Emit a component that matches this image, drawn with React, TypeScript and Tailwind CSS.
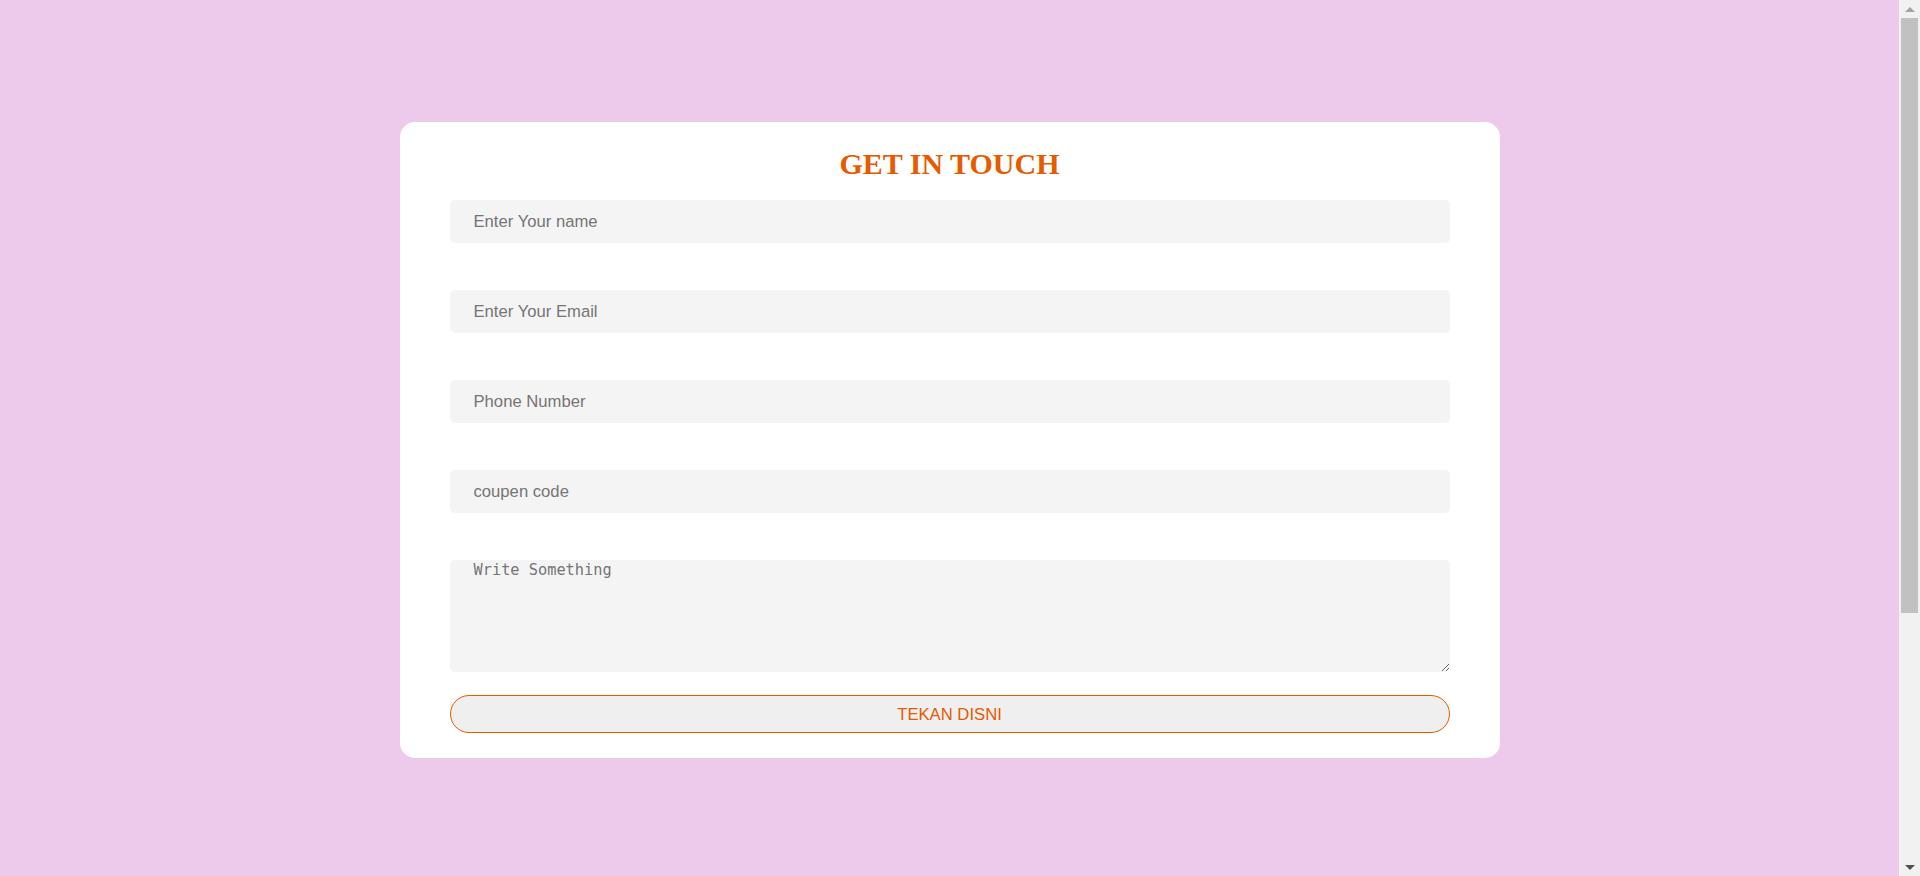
import React from 'react';

const fields = ['Enter Your name', 'Enter Your Email', 'Phone Number', 'coupen code'];

const Scrollbar: React.FC = () => (
  <div className="flex h-full w-[21px] shrink-0 flex-col bg-[#f1f1f1]">
    <div className="flex h-[18px] items-center justify-center">
      <div className="h-0 w-0 border-x-[5px] border-b-[5px] border-x-transparent border-b-[#a3a3a3]" />
    </div>
    <div className="mx-[2px] h-[595px] bg-[#c1c1c1]" />
    <div className="flex-1" />
    <div className="flex h-[18px] items-center justify-center">
      <div className="h-0 w-0 border-x-[5px] border-t-[5px] border-x-transparent border-t-[#505050]" />
    </div>
  </div>
);

const App: React.FC = () => {
  return (
    <div className="flex h-[876px] overflow-hidden bg-[#edcaeb] font-['Liberation_Sans',Arial,sans-serif]">
      <div className="flex-1 pt-[122px]">
        <form
          className="mx-auto flex w-[1100px] flex-col rounded-[15px] bg-white px-[50px] pt-[25px] pb-[25px]"
          onSubmit={e => e.preventDefault()}
        >
          <h1 className="mb-[20px] text-center font-['Liberation_Serif','Times_New_Roman',serif] text-[30px] leading-[33px] font-bold text-[#e65a00]">
            GET IN TOUCH
          </h1>

          <div className="flex flex-col gap-[47px]">
            {fields.map(f => (
              <input
                key={f}
                type="text"
                placeholder={f}
                className="h-[43px] w-full rounded-[5px] bg-[#f4f4f4] px-6 text-[16.67px] text-[#333] outline-none placeholder:text-[#757575]"
              />
            ))}
            <textarea
              placeholder="Write Something"
              className="h-[112px] w-full rounded-[5px] bg-[#f4f4f4] pt-[1px] pl-6 pr-6 font-['DejaVu_Sans_Mono','Liberation_Mono',monospace] text-[15.3px] leading-[18px] text-[#333] outline-none placeholder:text-[#757575]"
            />
          </div>

          <button
            type="submit"
            className="mt-[23px] h-[38px] w-full rounded-full border border-[#e65a00] bg-[#efefef] text-[16.67px] text-[#e65a00]"
          >
            TEKAN DISNI
          </button>
        </form>
      </div>
      <Scrollbar />
    </div>
  );
};

export default App;
